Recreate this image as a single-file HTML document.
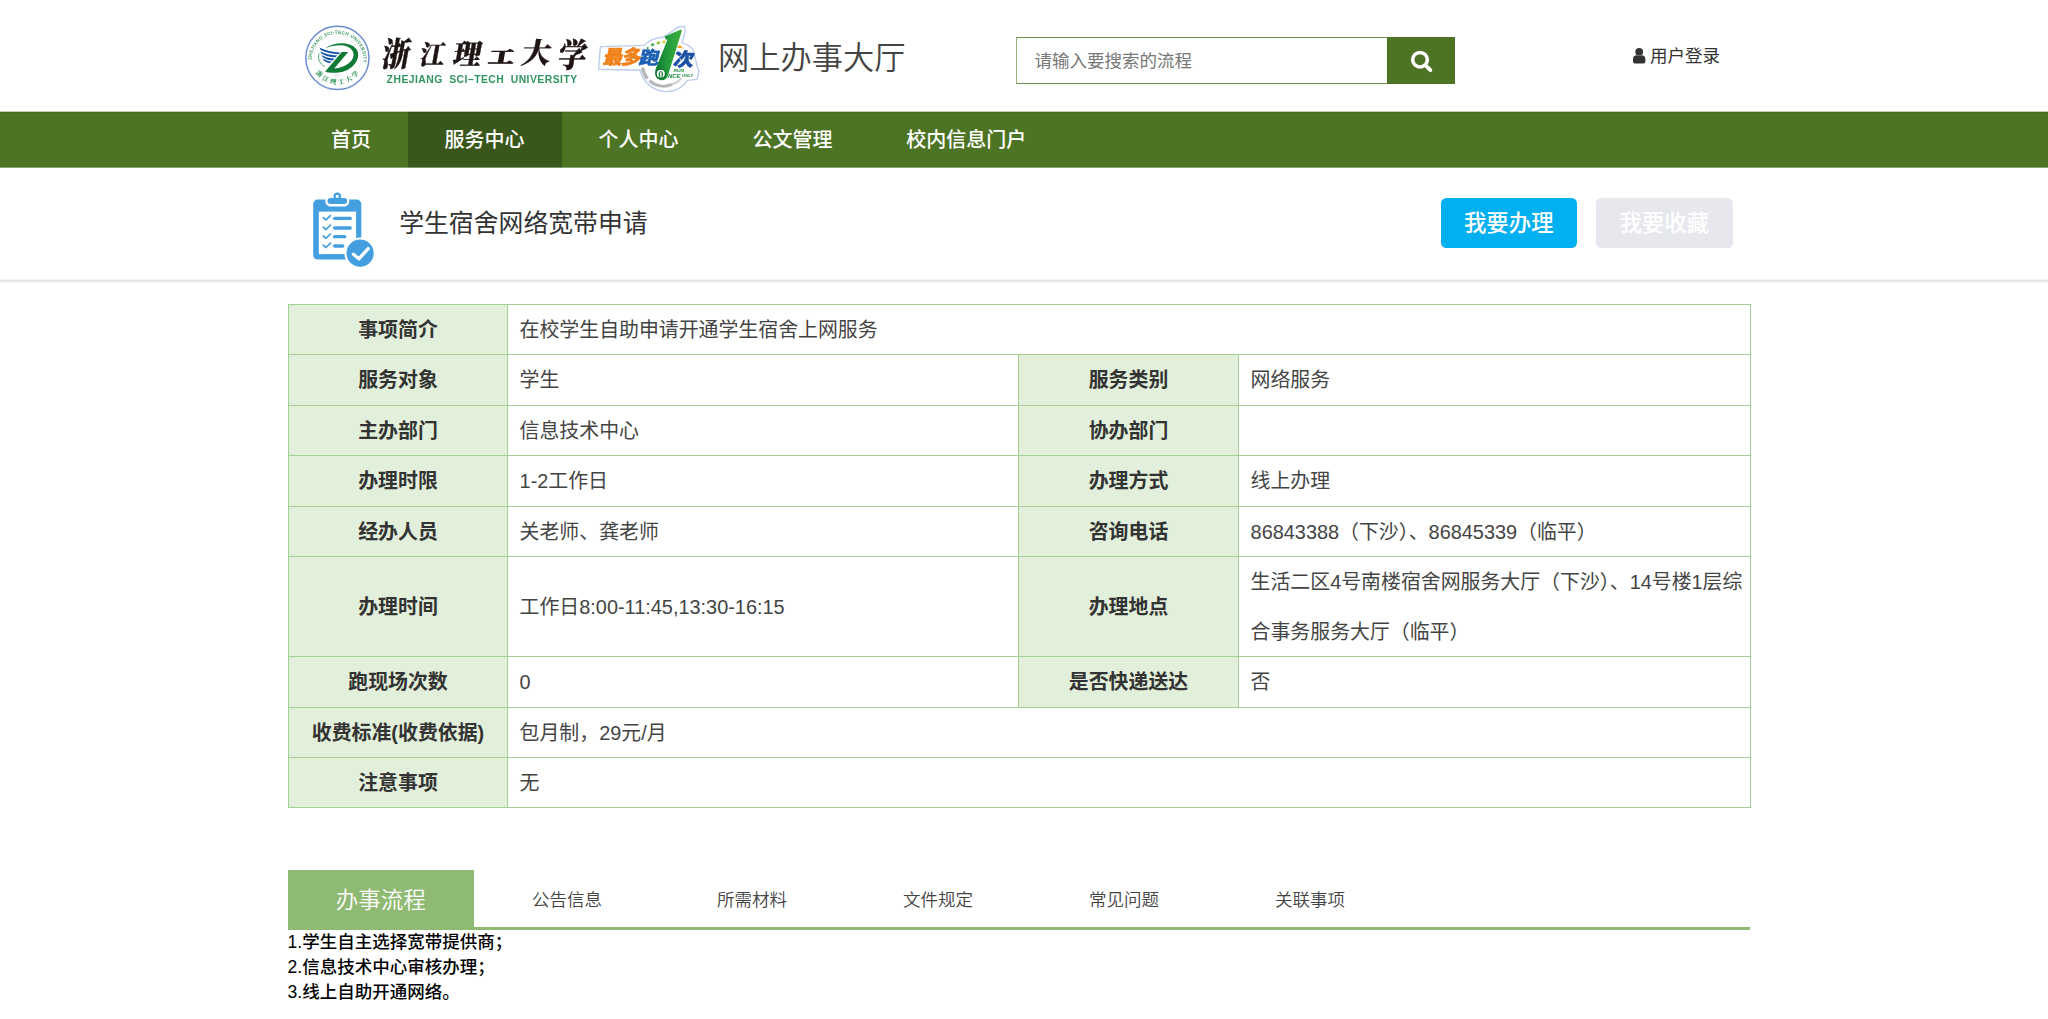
<!DOCTYPE html>
<html lang="zh-CN">
<head>
<meta charset="utf-8">
<title>网上办事大厅 - 学生宿舍网络宽带申请</title>
<style>
*{box-sizing:border-box;margin:0;padding:0}
html,body{width:2048px;height:1019px;overflow:hidden;background:#fff}
body{position:relative;font-family:"Liberation Sans","Noto Sans CJK SC",sans-serif;color:#333;font-size:20px}
.abs{position:absolute}
/* header */
#hdr{left:0;top:0;width:2048px;height:111px;background:#fff}
#sitename{left:718px;top:37px;font-size:31.25px;line-height:44px;color:#444;font-weight:350;white-space:nowrap}
#search{left:1016px;top:37px;width:439px;height:47px;border:1px solid #6d8f4c;border-left-color:#98b27f;background:#fff}
#search span{position:absolute;left:17.5px;top:1px;line-height:45px;font-size:17.5px;color:#777}
#sbtn{left:1387px;top:37px;width:68px;height:47px;background:#4d7324}
#login{left:1650px;top:42px;font-size:17.5px;line-height:28px;color:#333;white-space:nowrap}
/* nav */
#nav{left:0;top:111px;width:2048px;height:57px;background:linear-gradient(to bottom,#c1ceb2 0,#c1ceb2 1px,#466c1a 1px,#466c1a 2px,#4d7324 2px,#4d7324 56px,#8ba471 56px,#8ba471 57px)}
#nav .act{position:absolute;left:408px;top:0;width:154px;height:57px;background:linear-gradient(to bottom,#bac4af 0,#bac4af 1px,#334f12 1px,#334f12 2px,#39571b 2px,#39571b 56px,#7e926b 56px,#7e926b 57px)}
#nav span{position:absolute;top:1px;line-height:56px;font-size:20px;color:#fff;font-weight:500;white-space:nowrap}
/* title bar */
#tbar{left:0;top:168px;width:2048px;height:116px;background:linear-gradient(to bottom,#fff 0,#fff 111px,#f3f3f3 111px,#f3f3f3 112px,#e5e5e5 112px,#e5e5e5 113px,#ececec 113px,#ececec 114px,#f6f6f6 114px,#f6f6f6 115px,#fcfcfc 115px,#fcfcfc 116px)}
#ttl{left:399.2px;top:205.6px;font-size:24.85px;line-height:36px;color:#333;font-weight:400;white-space:nowrap}
.btn{top:198px;width:136.5px;height:50px;border-radius:5.5px;color:#fff;font-size:22.4px;line-height:52px;text-align:center;font-weight:500}
#b1{left:1440.5px;background:#00b0f0}
#b2{left:1596px;background:#e7e8ed}
/* table */
#tbl{left:288px;top:304px;width:1462px;border-collapse:collapse;table-layout:fixed}
#tbl td{border:1px solid #a5cf94;font-size:19.9px;line-height:inherit;padding:2px 0 0 11.6px;color:#444;vertical-align:middle;white-space:nowrap}
#tbl td.l{background:#e2efda;text-align:center;font-weight:700;color:#333;padding:2px 0 0 0}
#tbl tr.r1 td{padding-top:0}
/* tabs */
#tabact{left:288px;top:870px;width:185.5px;height:59px;background:#8fba73;color:#fff;font-size:22.5px;line-height:62px;text-align:center;font-weight:350}
#tabline{left:288px;top:927px;width:1462px;height:3px;background:#8fba73}
.tab{top:870px;width:186px;height:58px;line-height:60px;text-align:center;font-size:17.5px;color:#444;font-weight:350}
#list{left:287.6px;top:930px;font-size:17.5px;line-height:25px;color:#000;white-space:nowrap;font-weight:500}
</style>
</head>
<body>
<div id="hdr" class="abs"></div>

<svg id="logo" class="abs" style="left:296px;top:14px;filter:blur(.4px)" width="420" height="90" viewBox="296 14 420 90">
  <defs>
    <path id="arcTop" d="M 311.6 62 A 26 26 0 1 1 363.4 62"/>
    <path id="arcBot" d="M 312.5 66.5 A 26.5 26.5 0 0 0 362.5 66.5"/>
    <linearGradient id="g1" x1="0" y1="0" x2="1" y2="0"><stop offset="0" stop-color="#0f7a30"/><stop offset=".55" stop-color="#27a03f"/><stop offset="1" stop-color="#3fae3a"/></linearGradient>
  </defs>
  <!-- emblem -->
  <circle cx="337.4" cy="57.9" r="31.6" fill="#fff" stroke="#6b8ed2" stroke-width="1.5"/>
  <circle cx="337.4" cy="57.9" r="23.6" fill="none" stroke="#eef1f4" stroke-width="1"/>
  <text font-family="'Liberation Sans',sans-serif" font-size="4.6" font-weight="700" fill="#3a9a5e" letter-spacing=".35"><textPath href="#arcTop" startOffset="2">ZHEJIANG SCI-TECH UNIVERSITY</textPath></text>
  <text font-family="'Liberation Serif','Noto Serif CJK SC',serif" font-size="6.4" font-weight="900" fill="#2f9455" letter-spacing="2.4" text-anchor="middle"><textPath href="#arcBot" startOffset="51.5%">浙江理工大学</textPath></text>
  <text x="337.4" y="76.6" font-family="'Liberation Sans',sans-serif" font-size="2.6" fill="#b9bcc0" text-anchor="middle" letter-spacing=".5">1897</text>
  <path d="M325 48.4 C330 44.6 336 43.2 342 43.2 C351.4 43.4 358.4 47.8 358.2 54.8 C358 63.4 349 72.6 336 72.8 C331 72.9 327.4 72.6 325.2 71.4 L333 68.6 C344 68.4 353.4 61.6 353.6 55 C353.8 49.4 348 45.4 341 45.3 C335.6 45.2 330 46.4 325 48.4 Z" fill="#0e7a35"/>
  <path d="M325.2 71.4 L341.8 52 L348.2 52 L333.8 69 Z" fill="#0e7a35"/>
  <path d="M319.8 47.8 Q328 52 340.2 52.4 L338.6 54.2 Q327 53.8 320.4 49.8 Z" fill="#1553a8"/>
  <path d="M320.4 51.4 Q327 55 337.2 55.4 L335.6 57.2 Q327 57 321.2 53.4 Z" fill="#1553a8"/>
  <path d="M321.6 55 Q327 58.2 334.4 58.6 L332.8 60.4 Q327 60.2 322.6 57.2 Z" fill="#1553a8"/>
  <path d="M323 58.6 Q327 61.2 331.4 61.6 L329.8 63.2 Q326.4 63 323.8 60.6 Z" fill="#1553a8"/>
  <path d="M319.2 53.6 C317.4 58 319.4 63.6 324.6 66.8" fill="none" stroke="#3a9a5e" stroke-width=".9"/>
  <!-- name -->
  <g font-family="'Liberation Serif','Noto Serif CJK SC',serif" font-weight="900" fill="#1f1414" stroke="#1f1414" stroke-width=".35" stroke-linejoin="round">
    <text transform="translate(380.4 66.2) skewX(-10) scale(.96 1.14)" font-size="29">浙</text>
    <text transform="translate(418.6 63.6) skewX(-10) scale(.96 1)" font-size="26">江</text>
    <text transform="translate(452 63.8) skewX(-10) scale(1 .98)" font-size="28">理</text>
    <text transform="translate(487.6 62.8) skewX(-10) scale(1 .66)" font-size="26" stroke-width="1.3">工</text>
    <text transform="translate(520.6 63) skewX(-10) scale(1 .98)" font-size="29">大</text>
    <text transform="translate(556.4 67.4) skewX(-10) scale(.96 1.12)" font-size="29.5">学</text>
  </g>
  <text x="386.6" y="82.9" font-family="'Liberation Sans',sans-serif" font-size="10.4" font-weight="700" fill="#2f9462" textLength="190.6" lengthAdjust="spacing" word-spacing="3">ZHEJIANG SCI–TECH UNIVERSITY</text>
  <!-- zui duo pao yi ci -->
  <g>
    <path d="M600.4 46.6 L644 45.4 C649 40 656 37.6 663.4 37.2 L678.6 26.8 L684.6 26.4 L685.4 30 L682.2 42.6 C686 44 690 46 693 49.4 L697.6 67.6 L699 71.6 L697 79.4 L687.4 80.4 C683 87.6 674 91.8 666 91.6 C653 91.2 643.6 82.6 640 70.2 L598.6 69.2 Z" fill="#fff" stroke="#bccdec" stroke-width="1.4" stroke-linejoin="round"/>
    <path d="M642.6 67.8 A21 21 0 0 0 647.4 78.6" fill="none" stroke="#b4b6b8" stroke-width="3.4"/>
    <path d="M649.4 80.6 A21 21 0 0 0 672 84.4" fill="none" stroke="#b4b6b8" stroke-width="3"/>
    <path d="M672 84.4 A21 21 0 0 0 681.6 77.8" fill="none" stroke="#cfd1d3" stroke-width="2"/>
    <path d="M647 48.6 L648.4 47.4" fill="none" stroke="#1f8f3f" stroke-width="1.4"/>
    <path d="M651.4 45.4 L654 44" fill="none" stroke="#3aa648" stroke-width="2.4"/>
    <path d="M656.8 43.2 L660 42.4" fill="none" stroke="#8cc63f" stroke-width="2.6"/>
    <path d="M662.4 42 L665.4 41.8" fill="none" stroke="#c9d92f" stroke-width="2.6"/>
    <path d="M676.6 47.6 L679 45.2 C681 45.6 682.4 46.8 683 48.4 Z" fill="#f6a623"/>
    <g font-family="'Liberation Sans','Noto Sans CJK SC',sans-serif" font-weight="900" font-size="19.4" stroke-width=".5" stroke-linejoin="round">
      <text transform="translate(602.4 64.4) skewX(-12) scale(1 1)" fill="#f08119" stroke="#f08119" letter-spacing="-.9">最多</text>
      <text transform="translate(638.4 64) skewX(-12) scale(1 .9)" fill="#1b5fb4" stroke="#1b5fb4" font-size="19.8">跑</text>
      <text transform="translate(672.6 65.6) skewX(-12) scale(1 .9)" fill="#1b4fa6" stroke="#1b4fa6" font-size="20.4">次</text>
    </g>
    <path d="M680.9 29.6 C681.6 29.6 681.9 30.4 681.7 31.4 L667.6 76.6 C666.4 79.6 663.6 80.6 660.7 80.2 C656 79.4 653.6 74 656.2 67.6 L667.6 39.4 L666 39.8 L664.6 36.6 Z" fill="url(#g1)"/>
    <circle cx="660.8" cy="73.8" r="4.7" fill="#fff" stroke="#0d6b2a" stroke-width="1.2"/>
    <text x="660.8" y="77.6" font-family="'Liberation Serif',serif" font-weight="700" font-size="10.6" fill="#2a8a46" text-anchor="middle">0</text>
    <g font-family="'Liberation Sans',sans-serif" font-weight="700" font-style="italic" fill="#1d8a3a">
      <text x="673.4" y="71.5" font-size="3.7" textLength="10.8" lengthAdjust="spacingAndGlyphs">RUN</text>
      <text x="668" y="77.7" font-size="6" textLength="12.6" lengthAdjust="spacingAndGlyphs">NCE</text>
      <text x="682" y="77.4" font-size="3.9" textLength="11.2" lengthAdjust="spacingAndGlyphs">ONLY</text>
    </g>
  </g>
</svg>
<div id="sitename" class="abs">网上办事大厅</div>
<div id="search" class="abs"><span>请输入要搜索的流程</span></div>
<div id="sbtn" class="abs"></div>
<div id="login" class="abs">用户登录</div>


<svg class="abs" style="left:1405px;top:46px" width="32" height="30" viewBox="1405 46 32 30">
  <circle cx="1420" cy="59.7" r="7.3" fill="none" stroke="#fff" stroke-width="3.5"/>
  <path d="M1425.6 65.4 L1430.4 70.2" stroke="#fff" stroke-width="3.8" stroke-linecap="round"/>
</svg>
<svg class="abs" style="left:1630px;top:46px" width="18" height="20" viewBox="1630 46 18 20">
  <circle cx="1639.2" cy="51.8" r="3.9" fill="#333"/>
  <path d="M1633 63.4 L1633 59.4 C1633 56.6 1634.6 55.2 1636.6 55.2 C1638.2 56.2 1640.2 56.2 1641.8 55.2 C1643.8 55.2 1645.4 56.6 1645.4 59.4 L1645.4 61.6 C1645.4 62.8 1644.6 63.5 1643.4 63.5 L1635 63.5 C1633.8 63.5 1633 62.8 1633 61.6 Z" fill="#333"/>
</svg>

<div id="nav" class="abs">
  <div class="act"></div>
  <span style="left:331px">首页</span>
  <span style="left:444.4px">服务中心</span>
  <span style="left:598.5px">个人中心</span>
  <span style="left:752.6px">公文管理</span>
  <span style="left:906.2px">校内信息门户</span>
</div>

<div id="tbar" class="abs"></div>
<svg class="abs" style="left:308px;top:188px" width="72" height="84" viewBox="308 188 72 84">
  <rect x="313.2" y="199.6" width="48.1" height="59.9" rx="4.4" fill="#439fe0"/>
  <rect x="318.8" y="211.6" width="37.3" height="42.5" fill="#fff"/>
  <rect x="325.3" y="196" width="24" height="10.4" rx="5.2" fill="#fff"/>
  <circle cx="337.3" cy="196.3" r="5.6" fill="#fff"/>
  <rect x="327.5" y="198" width="19.6" height="6.1" rx="3.05" fill="#439fe0"/>
  <circle cx="337.3" cy="196.3" r="2.7" fill="none" stroke="#439fe0" stroke-width="2.1"/>
  <g stroke="#439fe0" stroke-width="3.3" stroke-linecap="round" fill="none">
    <path d="M334.6 218.4 H350.2"/><path d="M334.6 228 H350.2"/><path d="M334.6 236.7 H344.7"/><path d="M334.6 246 H342.8"/>
  </g>
  <g stroke="#439fe0" stroke-width="1.7" stroke-linecap="round" stroke-linejoin="round" fill="none">
    <path d="M323.2 217.6 L326 219.9 L330.4 215.6"/><path d="M323.2 227.2 L326 229.5 L330.4 225.2"/><path d="M323.2 236 L326 238.3 L330.4 234"/><path d="M323.2 245.2 L326 247.5 L330.4 243.2"/>
  </g>
  <circle cx="360.1" cy="253.1" r="15.7" fill="#fff"/>
  <circle cx="360.1" cy="253.1" r="13.6" fill="#439fe0"/>
  <path d="M353.4 254.2 L358.9 258.8 L368.2 248.6" fill="none" stroke="#fff" stroke-width="3.3" stroke-linecap="round" stroke-linejoin="round"/>
</svg>
<div id="ttl" class="abs">学生宿舍网络宽带申请</div>
<div id="b1" class="abs btn">我要办理</div>
<div id="b2" class="abs btn">我要收藏</div>

<table id="tbl" class="abs">
<colgroup><col style="width:219px"><col style="width:511px"><col style="width:220px"><col style="width:512px"></colgroup>
<tr style="line-height:47px"><td class="l">事项简介</td><td colspan="3">在校学生自助申请开通学生宿舍上网服务</td></tr>
<tr class="r1" style="line-height:50px"><td class="l">服务对象</td><td>学生</td><td class="l">服务类别</td><td>网络服务</td></tr>
<tr style="line-height:47px"><td class="l">主办部门</td><td>信息技术中心</td><td class="l">协办部门</td><td></td></tr>
<tr style="line-height:47.5px"><td class="l">办理时限</td><td>1-2工作日</td><td class="l">办理方式</td><td>线上办理</td></tr>
<tr style="line-height:47.5px"><td class="l">经办人员</td><td>关老师、龚老师</td><td class="l">咨询电话</td><td>86843388（下沙）、86845339（临平）</td></tr>
<tr style="line-height:47.5px"><td class="l">办理时间</td><td>工作日8:00-11:45,13:30-16:15</td><td class="l">办理地点</td><td style="white-space:normal;line-height:49.5px;padding-top:0"><div style="position:relative;top:1px">生活二区4号南楼宿舍网服务大厅（下沙）、14号楼1层综合事务服务大厅（临平）</div></td></tr>
<tr style="line-height:47.5px"><td class="l">跑现场次数</td><td>0</td><td class="l">是否快递送达</td><td>否</td></tr>
<tr style="line-height:47.5px"><td class="l">收费标准(收费依据)</td><td colspan="3">包月制，29元/月</td></tr>
<tr style="line-height:47px"><td class="l">注意事项</td><td colspan="3">无</td></tr>
</table>

<div id="tabact" class="abs">办事流程</div>
<div class="abs tab" style="left:474px">公告信息</div>
<div class="abs tab" style="left:659px">所需材料</div>
<div class="abs tab" style="left:845px">文件规定</div>
<div class="abs tab" style="left:1031px">常见问题</div>
<div class="abs tab" style="left:1217px">关联事项</div>
<div id="tabline" class="abs"></div>
<div id="list" class="abs">1.学生自主选择宽带提供商；<br>2.信息技术中心审核办理；<br>3.线上自助开通网络。</div>
</body>
</html>
